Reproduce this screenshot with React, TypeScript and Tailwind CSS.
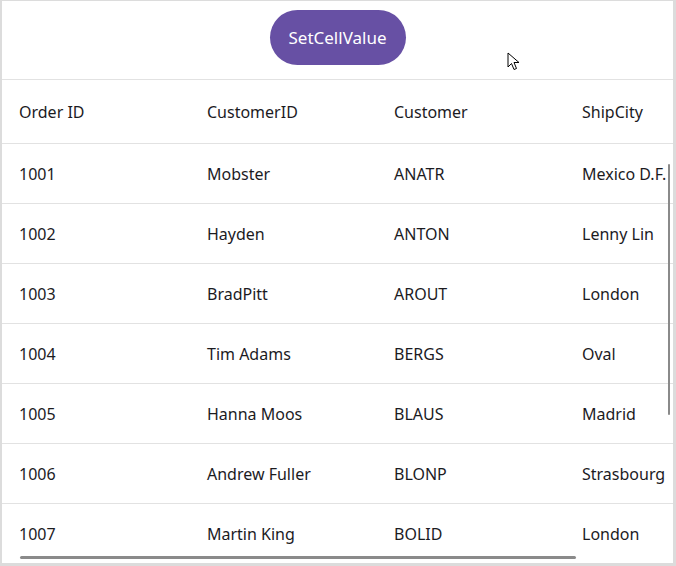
import { useState } from "react";

interface Order {
  orderId: number;
  customerId: string;
  customer: string;
  shipCity: string;
}

const initialOrders: Order[] = [
  { orderId: 1001, customerId: "Mobster", customer: "ANATR", shipCity: "Mexico D.F." },
  { orderId: 1002, customerId: "Hayden", customer: "ANTON", shipCity: "Lenny Lin" },
  { orderId: 1003, customerId: "BradPitt", customer: "AROUT", shipCity: "London" },
  { orderId: 1004, customerId: "Tim Adams", customer: "BERGS", shipCity: "Oval" },
  { orderId: 1005, customerId: "Hanna Moos", customer: "BLAUS", shipCity: "Madrid" },
  { orderId: 1006, customerId: "Andrew Fuller", customer: "BLONP", shipCity: "Strasbourg" },
  { orderId: 1007, customerId: "Martin King", customer: "BOLID", shipCity: "London" },
];

const columns = ["Order ID", "CustomerID", "Customer", "ShipCity"];

export default function App() {
  const [orders, setOrders] = useState(initialOrders);

  const setCellValue = () => {
    setOrders((prev) =>
      prev.map((o, i) => (i === 0 ? { ...o, customerId: "Mobster" } : o))
    );
  };

  return (
    <div
      className="relative w-[676px] h-[566px] overflow-hidden bg-white border-l-2 border-t border-r-[3px] border-b-[3px] border-[#dcdcdc] text-[#1c1b1f]"
      style={{ fontFamily: '"Noto Sans", "Open Sans", sans-serif' }}
    >
      {/* Toolbar */}
      <div className="h-[79px] flex items-start justify-center pt-[9px] border-b border-[#e2e2e2]">
        <button
          onClick={setCellValue}
          className="h-[55px] w-[136px] rounded-full bg-[#6750a4] text-white text-[17px]"
        >
          SetCellValue
        </button>
      </div>

      {/* Grid */}
      <div className="overflow-hidden">
        <div className="w-[760px]">
          <div className="grid grid-cols-[188px_187px_188px_197px] h-[64px] items-center border-b border-[#e2e2e2] text-[16px]">
            {columns.map((c) => (
              <div key={c} className="pl-[17px] whitespace-nowrap">
                {c}
              </div>
            ))}
          </div>
          {orders.map((o) => (
            <div
              key={o.orderId}
              className="grid grid-cols-[188px_187px_188px_197px] h-[60px] items-center border-b border-[#e2e2e2] text-[16px]"
            >
              <div className="pl-[17px]">{o.orderId}</div>
              <div className="pl-[17px] whitespace-nowrap">{o.customerId}</div>
              <div className="pl-[17px]">{o.customer}</div>
              <div className="pl-[17px] whitespace-nowrap">{o.shipCity}</div>
            </div>
          ))}
        </div>
      </div>

      {/* Scrollbars */}
      <div className="absolute left-[666px] top-[163px] w-[2px] h-[251px] rounded-full bg-[#8a8a8a]" />
      <div className="absolute left-[18px] top-[555px] h-[3px] w-[556px] rounded-full bg-[#8a8a8a]" />

      {/* Mouse pointer */}
      <svg
        className="absolute left-[505px] top-[51px]"
        width="14"
        height="20"
        viewBox="0 0 14 20"
      >
        <path
          d="M1 1 L1 15 L4.5 11.5 L7 17.5 L9.5 16.5 L7 10.5 L12 10.5 Z"
          fill="white"
          stroke="black"
          strokeWidth="1"
          strokeLinejoin="round"
        />
      </svg>
    </div>
  );
}
